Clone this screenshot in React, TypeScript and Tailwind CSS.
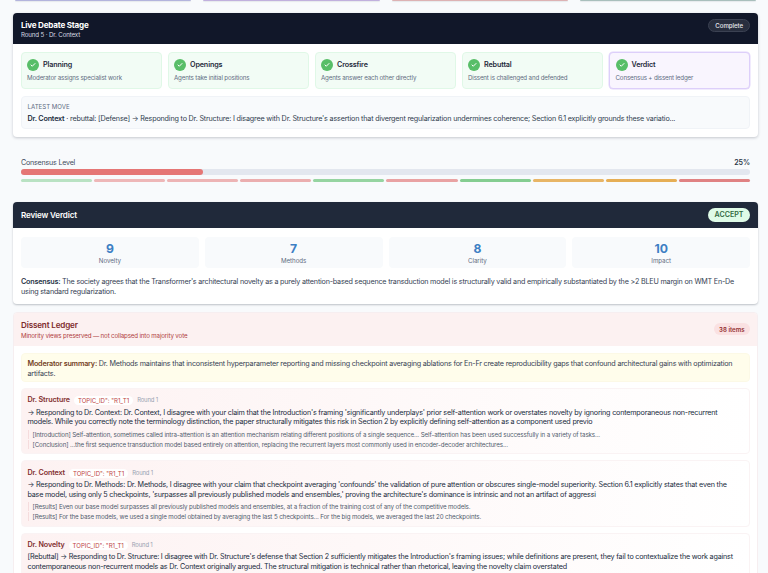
import { Check } from "lucide-react";

type Step = { title: string; detail: string; current?: boolean };

const STEPS: Step[] = [
  { title: "Planning", detail: "Moderator assigns specialist work" },
  { title: "Openings", detail: "Agents take initial positions" },
  { title: "Crossfire", detail: "Agents answer each other directly" },
  { title: "Rebuttal", detail: "Dissent is challenged and defended" },
  { title: "Verdict", detail: "Consensus + dissent ledger", current: true },
];

const AGENT_EDGES = ["bg-[#b3b4dd]", "bg-[#c1b0de]", "bg-[#ddb2b4]", "bg-[#a9bfbc]"];

const ROUND_SEGMENTS = [
  "bg-[#b9e2c3]",
  "bg-[#eeb7b8]",
  "bg-[#edb4b5]",
  "bg-[#ebaeaf]",
  "bg-[#96d4a1]",
  "bg-[#e9a2a3]",
  "bg-[#85cd91]",
  "bg-[#e8b566]",
  "bg-[#e6ae55]",
  "bg-[#e08283]",
];

const SCORES = [
  { value: 9, label: "Novelty" },
  { value: 7, label: "Methods" },
  { value: 8, label: "Clarity" },
  { value: 10, label: "Impact" },
];

const DISSENTS = [
  {
    agent: "Dr. Structure",
    text: "→ Responding to Dr. Context: Dr. Context, I disagree with your claim that the Introduction's framing 'significantly underplays' prior self-attention work or overstates novelty by ignoring contemporaneous non-recurrent models. While you correctly note the terminology distinction, the paper structurally mitigates this risk in Section 2 by explicitly defining self-attention as a component used previo",
    quotes: [
      "[Introduction] Self-attention, sometimes called intra-attention is an attention mechanism relating different positions of a single sequence... Self-attention has been used successfully in a variety of tasks...",
      "[Conclusion] ...the first sequence transduction model based entirely on attention, replacing the recurrent layers most commonly used in encoder-decoder architectures...",
    ],
  },
  {
    agent: "Dr. Context",
    text: "→ Responding to Dr. Methods: Dr. Methods, I disagree with your claim that checkpoint averaging 'confounds' the validation of pure attention or obscures single-model superiority. Section 6.1 explicitly states that even the base model, using only 5 checkpoints, 'surpasses all previously published models and ensembles,' proving the architecture's dominance is intrinsic and not an artifact of aggressi",
    quotes: [
      "[Results] Even our base model surpasses all previously published models and ensembles, at a fraction of the training cost of any of the competitive models.",
      "[Results] For the base models, we used a single model obtained by averaging the last 5 checkpoints... For the big models, we averaged the last 20 checkpoints.",
    ],
  },
  {
    agent: "Dr. Novelty",
    text: "[Rebuttal] → Responding to Dr. Structure: I disagree with Dr. Structure's defense that Section 2 sufficiently mitigates the Introduction's framing issues; while definitions are present, they fail to contextualize the work against contemporaneous non-recurrent models as Dr. Context originally argued. The structural mitigation is technical rather than rhetorical, leaving the novelty claim overstated",
    quotes: [],
  },
];

function StageCard() {
  return (
    <section className="h-[124.4px] overflow-hidden rounded-[4px] bg-white shadow-[0_1px_3px_rgba(15,23,42,0.22)]">
      <header className="flex h-[31.4px] items-start justify-between bg-[#111729] px-2 pt-[6px]">
        <div>
          <h2 className="text-[8.1px] leading-[12px] font-bold tracking-[-0.22px] text-white">Live Debate Stage</h2>
          <p className="text-[6.2px] leading-[8px] tracking-[-0.15px] text-[#d5dae3]">Round 5 · Dr. Context</p>
        </div>
        <span className="flex h-[13px] items-center rounded-full border-[0.5px] border-[#3b4152] bg-[#282e3e] px-[6px] text-[6.1px] font-medium tracking-[-0.05px] text-[#e8eaef]">
          Complete
        </span>
      </header>
      <div className="flex flex-col gap-[7px] p-2">
        <div className="grid grid-cols-5 gap-[6px]">
          {STEPS.map((s) => (
            <div
              key={s.title}
              className={
                s.current
                  ? "h-[37px] rounded-[4px] border border-[#ddcffa] bg-[#f9f5fe] px-[5.5px] pt-[6px] shadow-[0_0_0_0.5px_#e4d8fb]"
                  : "h-[37px] rounded-[4px] border border-[#e0f8e7] bg-[#f2fcf5] px-[5px] pt-[6px]"
              }
            >
              <div className="flex h-[12px] items-center gap-1">
                <span className="flex h-[12px] w-[12px] shrink-0 items-center justify-center rounded-full bg-[#58be68]">
                  <Check className="h-[6px] w-[6px] text-white" strokeWidth={4} />
                </span>
                <span className="text-[7.2px] font-semibold tracking-[-0.13px] text-[#1f2a3b]">{s.title}</span>
              </div>
              <p className="mt-[2.5px] text-[6.2px] leading-[9px] tracking-[-0.15px] whitespace-nowrap text-[#5f6c82]">{s.detail}</p>
            </div>
          ))}
        </div>
        <div className="h-[33px] rounded-[4px] border border-[#f0f3f7] bg-[#f8fafc] px-[5.5px] pt-[5px]">
          <p className="text-[6.1px] leading-[9px] text-[#5f6d83] uppercase">Latest move</p>
          <p className="mt-[3px] text-[7.2px] leading-[10px] tracking-[-0.18px] whitespace-nowrap text-[#303c4e]">
            <b className="font-semibold text-[#202c3e]">Dr. Context</b> · rebuttal: [Defense] → Responding to Dr. Structure: I disagree
            with Dr. Structure's assertion that divergent regularization undermines coherence; Section 6.1 explicitly grounds these variatio...
          </p>
        </div>
      </div>
    </section>
  );
}

function ConsensusLevel() {
  return (
    <section className="mt-[21px] px-2">
      <div className="flex h-[10px] items-center justify-between text-[#3f4c60]">
        <span className="text-[7.1px] tracking-[-0.2px]">Consensus Level</span>
        <span className="text-[7.1px] font-semibold tracking-[-0.1px] text-[#2b3648]">25%</span>
      </div>
      <div className="mt-px h-[6px] rounded-full bg-[#e3e7ef]">
        <div className="h-full w-1/4 rounded-full bg-[#e57675]" />
      </div>
      <div className="mt-1 flex gap-[2px]">
        {ROUND_SEGMENTS.map((color) => (
          <div key={color} className={`h-[3px] flex-1 rounded-full ${color}`} />
        ))}
      </div>
    </section>
  );
}

function VerdictCard() {
  return (
    <section className="mt-[20px] h-[102px] overflow-hidden rounded-[4px] bg-white shadow-[0_1px_2px_rgba(15,23,42,0.25)]">
      <header className="flex h-[26.4px] items-center justify-between bg-[#20293a] px-2">
        <h2 className="text-[8.1px] font-semibold tracking-[-0.16px] text-white">Review Verdict</h2>
        <span className="flex h-[14px] items-center rounded-full bg-[#dffbe7] px-[6.5px] text-[7.1px] font-semibold text-[#32693f]">
          ACCEPT
        </span>
      </header>
      <div className="px-2 pt-[8.6px]">
        <div className="grid grid-cols-4 gap-[6px]">
          {SCORES.map((s) => (
            <div key={s.label} className="h-[31px] rounded-[4px] bg-[#f8fafc] pt-[5px] text-center">
              <div className="text-[12.2px] leading-[14px] font-bold text-[#3d7fc4]">{s.value}</div>
              <div className="text-[6.2px] leading-[9px] tracking-[-0.05px] text-[#5f6c82]">{s.label}</div>
            </div>
          ))}
        </div>
        <p className="mt-[9px] text-[7.2px] leading-[10px] tracking-[-0.2px] text-[#364254]">
          <b className="font-semibold text-[#2a3648]">Consensus:</b> The society agrees that the Transformer's architectural novelty as a
          purely attention-based sequence transduction model is structurally valid and empirically substantiated by the &gt;2 BLEU margin on
          WMT En-De using standard regularization.
        </p>
      </div>
    </section>
  );
}

function DissentLedger() {
  return (
    <section className="mt-2 overflow-hidden rounded-[4px] border-[0.5px] border-[#f6eef0] bg-white">
      <header className="flex h-[33px] items-center justify-between bg-[#fcf1f1] px-[7px]">
        <div>
          <h2 className="text-[8.1px] leading-[12px] font-semibold tracking-[-0.16px] text-[#7d2a2b]">Dissent Ledger</h2>
          <p className="text-[6.2px] leading-[9px] tracking-[-0.15px] text-[#b04040]">
            Minority views preserved — not collapsed into majority vote
          </p>
        </div>
        <span className="flex h-[12px] items-center rounded-full bg-[#fae1e2] px-[5.5px] text-[6.1px] font-semibold text-[#932f30]">
          38 items
        </span>
      </header>
      <div className="flex flex-col gap-[6px] px-[7px] pt-[7px]">
        <p className="h-[29px] rounded-[4px] border border-[#fcf9e6] bg-[#fffdeb] px-[5.5px] pt-[4.7px] text-[7.2px] leading-[10px] tracking-[-0.2px] text-[#364254]">
          <b className="font-semibold text-[#75421f]">Moderator summary:</b> Dr. Methods maintains that inconsistent hyperparameter reporting
          and missing checkpoint averaging ablations for En-Fr create reproducibility gaps that confound architectural gains with
          optimization artifacts.
        </p>
        {DISSENTS.map((d) => (
          <article
            key={d.agent}
            className="h-[66.3px] rounded-[4px] border border-[#faf3f4] bg-gradient-to-r from-[#fdf2f2] to-white px-[5.5px] pt-[5.8px]"
          >
            <div className="flex h-[12px] items-center gap-1">
              <h3 className="text-[7.2px] font-semibold tracking-[-0.13px] text-[#832f30]">{d.agent}</h3>
              <span className="flex h-[9px] items-center rounded-full bg-white px-1 text-[6.1px] tracking-[-0.02px] text-[#c04646]">TOPIC_ID": "R1_T1</span>
              <span className="text-[5.9px] tracking-[-0.15px] text-[#99a2b1]">Round 1</span>
            </div>
            <p className="mt-[1px] text-[7.2px] leading-[9.6px] tracking-[-0.2px] text-[#202b3d]">{d.text}</p>
            <div className="mt-[3px] flex flex-col gap-[1px]">
              {d.quotes.map((q) => (
                <p key={q} className="border-l border-[#f5dcdd] pl-[4px] text-[6.2px] leading-[9px] tracking-[-0.11px] whitespace-nowrap text-[#4f5b6d]">
                  {q}
                </p>
              ))}
            </div>
          </article>
        ))}
      </div>
    </section>
  );
}

export default function App() {
  return (
    <main className="h-[573px] w-[768px] overflow-hidden bg-[#f8fafc] pr-[10px] pl-[13px] font-[Inter,sans-serif]">
      <div className="grid h-[12.6px] grid-cols-4 items-start gap-[12px] px-[2px]">
        {AGENT_EDGES.map((edge) => (
          <div key={edge} className={`h-px rounded-b-sm shadow-[0_1px_1px_rgba(15,23,42,0.08)] ${edge}`} />
        ))}
      </div>
      <StageCard />
      <ConsensusLevel />
      <VerdictCard />
      <DissentLedger />
    </main>
  );
}
